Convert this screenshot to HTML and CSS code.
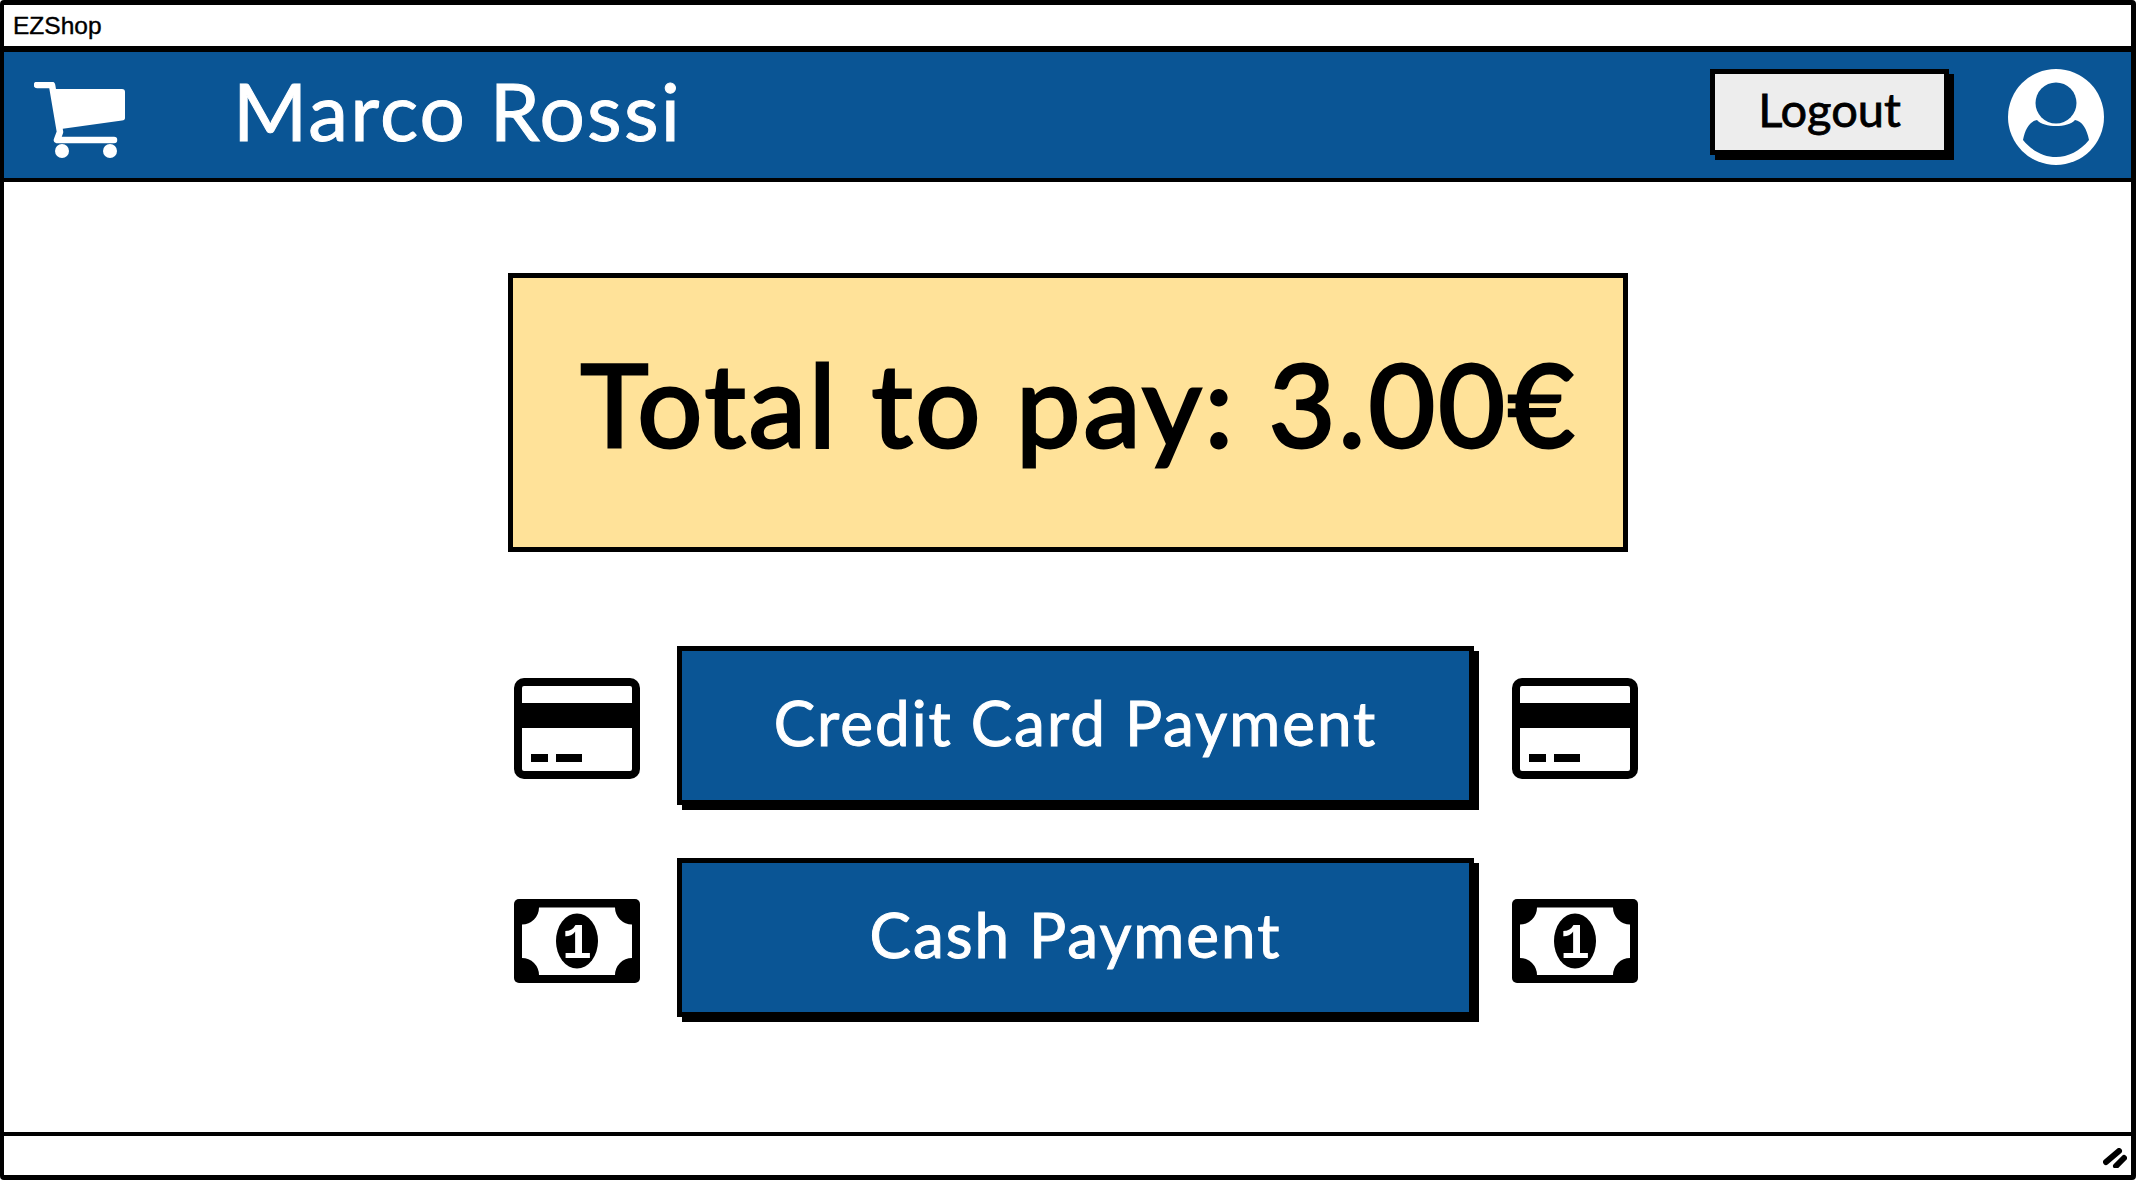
FILE: index.html
```html
<!DOCTYPE html>
<html lang="en">
<head>
<meta charset="utf-8">
<title>EZShop</title>
<link rel="stylesheet" href="styles.css">
</head>
<body>
<div class="window">
  <div class="titlebar">EZShop</div>
  <header class="header">
    <svg class="cart" viewBox="0 0 91 76" aria-hidden="true">
      <path class="cart-line" d="M3 3H18L26 50L23 58H80"/>
      <path class="cart-fill" d="M17 7H88Q91 7 91 10V36Q91 38 88 38.500L27 47Z"/>
      <circle class="cart-fill" cx="28" cy="69" r="7"/>
      <circle class="cart-fill" cx="76" cy="69" r="7"/>
    </svg>
    <div class="user-name">Marco Rossi</div>
    <button class="logout">Logout</button>
    <svg class="avatar" viewBox="-48 -48 96 96" aria-hidden="true">
      <circle class="avatar-bg" r="48"/>
      <circle class="avatar-fg" cy="-14" r="20.500"/>
      <path class="avatar-fg" d="M-33 23C-31 12-26 4-19 3C-12 11 12 11 19 3C26 4 31 12 33 23C24 34 12 40 0 40C-12 40-24 34-33 23Z"/>
    </svg>
  </header>
  <main class="main">
    <div class="total">Total to pay: 3.00€</div>
    <div class="pay-row">
      <svg class="pay-icon card-icon" viewBox="0 0 126 101" aria-hidden="true">
        <rect class="ink" width="126" height="101" rx="10"/>
        <rect class="paper" x="8" y="8" width="110" height="85" rx="2"/>
        <rect class="ink" x="8" y="25" width="110" height="25"/>
        <rect class="ink" x="17" y="76" width="17" height="8"/>
        <rect class="ink" x="42" y="76" width="26" height="8"/>
      </svg>
      <button class="pay-btn"><span class="pay-label">Credit Card Payment</span></button>
      <svg class="pay-icon card-icon" viewBox="0 0 126 101" aria-hidden="true">
        <rect class="ink" width="126" height="101" rx="10"/>
        <rect class="paper" x="8" y="8" width="110" height="85" rx="2"/>
        <rect class="ink" x="8" y="25" width="110" height="25"/>
        <rect class="ink" x="17" y="76" width="17" height="8"/>
        <rect class="ink" x="42" y="76" width="26" height="8"/>
      </svg>
    </div>
    <div class="pay-row">
      <svg class="pay-icon cash-icon" viewBox="0 0 126 84" aria-hidden="true">
        <rect class="ink" width="126" height="84" rx="5"/>
        <path class="paper" d="M25 8.500H101A17 17 0 0 0 118 25.500V59A17 17 0 0 0 101 76H25A17 17 0 0 0 8 59V25.500A17 17 0 0 0 25 8.500Z"/>
        <ellipse class="ink" cx="63" cy="42" rx="21" ry="27.500"/>
        <text class="cash-digit" x="63" y="59" text-anchor="middle">1</text>
      </svg>
      <button class="pay-btn"><span class="pay-label">Cash Payment</span></button>
      <svg class="pay-icon cash-icon" viewBox="0 0 126 84" aria-hidden="true">
        <rect class="ink" width="126" height="84" rx="5"/>
        <path class="paper" d="M25 8.500H101A17 17 0 0 0 118 25.500V59A17 17 0 0 0 101 76H25A17 17 0 0 0 8 59V25.500A17 17 0 0 0 25 8.500Z"/>
        <ellipse class="ink" cx="63" cy="42" rx="21" ry="27.500"/>
        <text class="cash-digit" x="63" y="59" text-anchor="middle">1</text>
      </svg>
    </div>
  </main>
  <footer class="footer">
    <svg class="resize" viewBox="0 0 24 20" aria-hidden="true">
      <path d="M3 14L16 3M13 18L21 10"/>
    </svg>
  </footer>
</div>
</body>
</html>
```

FILE: styles.css
```css
* {
  box-sizing: border-box;
}

html,
body {
  margin: 0;
  background: #fff;
}

.window {
  width: 2136px;
  height: 1180px;
  display: flex;
  flex-direction: column;
  border: 4px solid #000;
  border-width: 5px 5px 5px 4px;
  border-radius: 4px;
  overflow: hidden;
  font-family: "Lato", "Liberation Sans", sans-serif;
}

.titlebar {
  height: 47px;
  flex: none;
  padding-left: 9px;
  border-bottom: 6px solid #000;
  font: 24.500px/41px "Liberation Sans", sans-serif;
  color: #000;
  -webkit-text-stroke: 0.4px #000;
}

.header {
  height: 130px;
  flex: none;
  display: flex;
  align-items: flex-start;
  padding: 17px 27px 0 30px;
  background: #0a5595;
  border-bottom: 4px solid #000;
}

.cart {
  width: 91px;
  height: 76px;
  flex: none;
  margin-top: 13px;
}

.cart-line {
  fill: none;
  stroke: #fff;
  stroke-width: 6.500;
  stroke-linecap: round;
  stroke-linejoin: round;
}

.cart-fill {
  fill: #fff;
}

.user-name {
  margin-left: 108px;
  margin-top: -7px;
  color: #fff;
  font-size: 80px;
  line-height: 96px;
  letter-spacing: 2.200px;
  -webkit-text-stroke: 1px #fff;
}

.logout {
  width: 239px;
  height: 86px;
  flex: none;
  margin-left: auto;
  padding: 0 0 6px;
  background: #ededed;
  border: 5px solid #000;
  box-shadow: 5px 5px 0 #000;
  color: #000;
  font-family: inherit;
  font-size: 47px;
  -webkit-text-stroke: 0.800px #000;
}

.avatar {
  width: 96px;
  height: 96px;
  flex: none;
  margin-left: 59px;
}

.avatar-bg {
  fill: #fff;
}

.avatar-fg {
  fill: #0a5595;
}

.main {
  flex: 1;
  display: flex;
  flex-direction: column;
  align-items: flex-start;
  padding: 91px 0 0 504px;
}

.total {
  width: 1120px;
  height: 279px;
  flex: none;
  display: flex;
  align-items: center;
  justify-content: center;
  padding: 0 0 22px 22px;
  background: #ffe299;
  border: 5px solid #000;
  color: #000;
  font-size: 115px;
  letter-spacing: 3px;
  white-space: nowrap;
  -webkit-text-stroke: 3px #000;
}

.pay-row {
  display: flex;
  align-items: center;
  gap: 37px;
  margin: 53px 0 0 6px;
}

.total + .pay-row {
  margin-top: 94px;
}

.pay-btn {
  width: 797px;
  height: 159px;
  flex: none;
  margin-right: 1px;
  padding: 0 0 8px;
  background: #0a5595;
  border: 5px solid #000;
  box-shadow: 5px 5px 0 #000;
  color: #fff;
  font-family: inherit;
  font-size: 62px;
  letter-spacing: 2px;
}

.pay-label {
  -webkit-text-stroke: 1px #fff;
}

.pay-icon {
  width: 126px;
  flex: none;
  margin-top: 6px;
}

.card-icon {
  height: 101px;
}

.cash-icon {
  height: 84px;
}

.ink {
  fill: #000;
}

.paper {
  fill: #fff;
}

.cash-digit {
  fill: #fff;
  font-family: "Liberation Mono", monospace;
  font-size: 50px;
  font-weight: 700;
}

.footer {
  height: 43px;
  flex: none;
  display: flex;
  justify-content: flex-end;
  align-items: flex-start;
  padding: 12px 4px 0 0;
  border-top: 4px solid #000;
}

.resize {
  width: 24px;
  height: 20px;
}

.resize path {
  fill: none;
  stroke: #000;
  stroke-width: 6;
  stroke-linecap: round;
}
```
